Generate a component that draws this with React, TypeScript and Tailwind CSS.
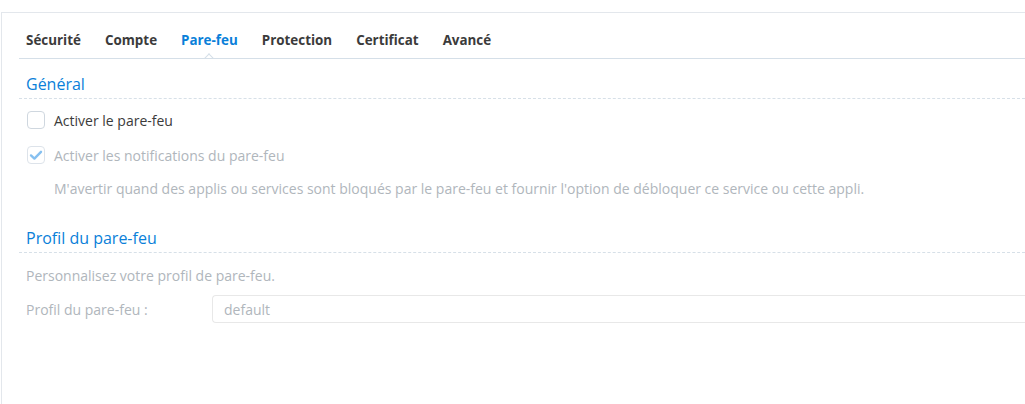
import React from "react";

const tabs = ["Sécurité", "Compte", "Pare-feu", "Protection", "Certificat", "Avancé"];

function SectionTitle({ children }: { children: React.ReactNode }) {
  return (
    <div className="ml-[17px] border-b border-dashed border-[#d7e0e8] pl-[7px] h-[30px] flex items-center">
      <span className="text-[16px] text-[#0a7fd9]">{children}</span>
    </div>
  );
}

export default function App() {
  return (
    <div
      className="w-[1025px] h-[404px] bg-white overflow-hidden pt-[12px]"
      style={{ fontFamily: '"Open Sans", "Noto Sans", sans-serif' }}
    >
      <div className="ml-[1px] h-[392px] border-t border-l border-[#e3e7ec] bg-white">
        {/* Tabs */}
        <div className="ml-[17px] mt-[13px] h-[33px] border-b border-[#d5dfe8] flex items-start pl-[7px] gap-[24px] relative">
          {tabs.map((t) => (
            <div
              key={t}
              className={
                "relative text-[13.4px] font-bold leading-[28px] " +
                (t === "Pare-feu" ? "text-[#0a7fd9]" : "text-[#3b3b3b]")
              }
            >
              {t}
              {t === "Pare-feu" && (
                <span className="absolute left-1/2 -translate-x-1/2 top-[26px] w-[12px] h-[6px] overflow-hidden">
                  <span className="block w-[8px] h-[8px] bg-white border-l border-t border-[#d5dfe8] rotate-45 mt-[3px] ml-[2px]" />
                </span>
              )}
            </div>
          ))}
        </div>

        <div className="mt-[10px]">
          <SectionTitle>Général</SectionTitle>
        </div>

        <div className="pl-[25px] mt-[12px] flex items-center gap-[9px] h-[18px]">
          <span className="w-[18px] h-[18px] rounded-[4px] border border-[#cfd7df] bg-white" />
          <span className="text-[14px] text-[#3b3b3b]">Activer le pare-feu</span>
        </div>

        <div className="pl-[25px] mt-[17px] flex items-center gap-[9px] h-[18px]">
          <span className="w-[18px] h-[18px] rounded-[4px] border border-[#dde3ea] bg-white flex items-center justify-center">
            <svg width="14" height="14" viewBox="0 0 14 14">
              <path d="M2 7.4 L5.4 10.6 L12 3.8" fill="none" stroke="#86c0f0" strokeWidth="2.4" strokeLinecap="round" strokeLinejoin="round" />
            </svg>
          </span>
          <span className="text-[14px] text-[#b0b6bc]">Activer les notifications du pare-feu</span>
        </div>

        <div className="pl-[52px] mt-[16px] text-[14px] text-[#b0b6bc] h-[18px] leading-[18px]">
          M'avertir quand des applis ou services sont bloqués par le pare-feu et fournir l'option de débloquer ce service ou cette appli.
        </div>

        <div className="mt-[25px]">
          <SectionTitle>Profil du pare-feu</SectionTitle>
        </div>

        <div className="pl-[24px] mt-[14px] text-[14px] text-[#b0b6bc] h-[18px] leading-[18px]">
          Personnalisez votre profil de pare-feu.
        </div>

        <div className="pl-[24px] mt-[10px] flex items-center">
          <span className="w-[186px] text-[14px] text-[#b0b6bc]">Profil du pare-feu :</span>
          <div className="flex-1 h-[28px] rounded-l-[4px] border border-r-0 border-[#e8e8e8] flex items-center pl-[11px] text-[14px] text-[#b0b6bc]">
            default
          </div>
        </div>
      </div>
    </div>
  );
}
